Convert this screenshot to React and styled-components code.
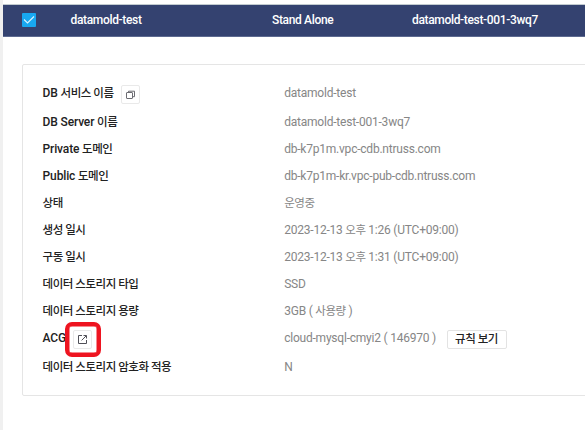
import React from "react";
import styled, { createGlobalStyle } from "styled-components";

const GlobalStyle = createGlobalStyle`
  * { box-sizing: border-box; }
  body {
    margin: 0;
    overflow: hidden;
    background: #fff;
    font-family: Roboto, "Noto Sans CJK KR", sans-serif;
    font-size: 12px;
  }
`;

const Page = styled.main`
  width: 585px;
  height: 430px;
  padding-top: 4px;
  border-left: 3px solid #f0f0f0;
  overflow: hidden;
`;

const SelectedRow = styled.header`
  display: grid;
  grid-template-columns: 48.5px 201.5px 140px 1fr;
  align-items: center;
  height: 33px;
  padding: 0 0 1px 19px;
  border-top: 1px solid #c2cbd0;
  border-bottom: 1px solid #5d6a90;
  background: #344270;
  color: #fff;
  white-space: nowrap;
`;

const HeaderText = styled.span`
  font-weight: 500;
  letter-spacing: -0.34px;
`;

const CheckBox = styled.span`
  display: flex;
  width: 14px;
  height: 14px;
  border-radius: 1px;
  background: #18a8f1;
`;

const Panel = styled.section`
  width: 600px;
  height: 332px;
  margin: 27px 0 0 19px;
  padding: 15px 19px 12px 19.6px;
  border: 1px solid #e5e5e5;
  border-radius: 2px;
`;

const Row = styled.div`
  display: grid;
  grid-template-columns: 241.6px 1fr;
  height: ${(p) => (p.$tall ? 29 : 27)}px;
  line-height: 27px;
  white-space: nowrap;
`;

const Cell = styled.div`
  display: flex;
  align-items: flex-start;
  height: 27px;
`;

const Label = styled.span`
  color: #222;
  font-weight: 500;
  letter-spacing: -0.15px;
`;

const Value = styled.span`
  color: #868686;
  letter-spacing: -0.22px;
`;

const Hangul = styled.span`
  font-size: 11.5px;
  letter-spacing: -0.46px;
`;

const IconButton = styled.button`
  display: flex;
  align-items: center;
  justify-content: center;
  width: 19px;
  height: 19px;
  margin: 5px 0 0 ${(p) => p.$gap}px;
  padding: 0;
  border: 1px solid #e9e9e9;
  border-radius: 2px;
  background: #fff;
`;

const Highlight = styled.span`
  display: flex;
  flex: none;
  width: 36px;
  height: 35px;
  margin: -3px 0 0 -1px;
  padding: 0 0 0 3.5px;
  border: 4px solid #ee1420;
  border-radius: 7px;
  box-shadow: inset 0 0 0 0.5px #ee1420;

  ${IconButton} {
    margin-top: 4px;
  }
`;

const RuleButton = styled.button`
  width: 60px;
  height: 19px;
  margin: 5px 0 0 10.5px;
  padding: 0;
  border: 1px solid #e3e3e3;
  border-radius: 2px;
  background: #fff;
  color: #222;
  font: 500 12px/17px Roboto, "Noto Sans CJK KR", sans-serif;
`;

const CheckIcon = () => (
  <svg width="14" height="14" viewBox="0 0 14 14" fill="none" stroke="#d9f2ff" strokeWidth="1.1">
    <path d="M2 6.5 5.5 10 12 3.5" />
  </svg>
);

const CopyIcon = () => (
  <svg width="9" height="9" viewBox="0 0 9 9" fill="none" stroke="#6c6c72" strokeWidth="1">
    <rect x="0.5" y="2.5" width="6" height="6" rx="0.5" />
    <path d="M2.5 2.5v-1.3h6v5.5h-2" />
  </svg>
);

const LinkIcon = () => (
  <svg width="9" height="9" viewBox="0 0 9 9" fill="none" stroke="#505058" strokeWidth="1">
    <path d="M4 0.5H0.5v8h8V5M3.6 5.4 8.2 0.8M5.5 0.5h3v3" />
  </svg>
);

const MixedText = ({ children }) =>
  children
    .split(/([가-힣]+(?: [가-힣]+)*)/)
    .map((part, i) => (i % 2 ? <Hangul key={i}>{part}</Hangul> : part));

const rows = [
  { label: "DB 서비스 이름", value: "datamold-test", copy: true },
  { label: "DB Server 이름", value: "datamold-test-001-3wq7" },
  { label: "Private 도메인", value: "db-k7p1m.vpc-cdb.ntruss.com" },
  { label: "Public 도메인", value: "db-k7p1m-kr.vpc-pub-cdb.ntruss.com" },
  { label: "상태", value: "운영중" },
  { label: "생성 일시", value: "2023-12-13 오후 1:26 (UTC+09:00)" },
  { label: "구동 일시", value: "2023-12-13 오후 1:31 (UTC+09:00)" },
  { label: "데이터 스토리지 타입", value: "SSD" },
  { label: "데이터 스토리지 용량", value: "3GB ( 사용량 )" },
  { label: "ACG", value: "cloud-mysql-cmyi2 ( 146970 )", acg: true },
  { label: "데이터 스토리지 암호화 적용", value: "N" },
];

export default function App() {
  return (
    <>
      <GlobalStyle />
      <Page>
        <SelectedRow>
          <CheckBox role="checkbox" aria-checked="true"><CheckIcon /></CheckBox>
          <HeaderText>datamold-test</HeaderText>
          <HeaderText>Stand Alone</HeaderText>
          <HeaderText>datamold-test-001-3wq7</HeaderText>
        </SelectedRow>
        <Panel>
          {rows.map((row) => (
            <Row key={row.label} $tall={row.copy || row.acg}>
              <Cell>
                <Label><MixedText>{row.label}</MixedText></Label>
                {row.copy && <IconButton $gap={7.5}><CopyIcon /></IconButton>}
                {row.acg && (
                  <Highlight>
                    <IconButton $gap={0}><LinkIcon /></IconButton>
                  </Highlight>
                )}
              </Cell>
              <Cell>
                <Value><MixedText>{row.value}</MixedText></Value>
                {row.acg && <RuleButton><Hangul>규칙 보기</Hangul></RuleButton>}
              </Cell>
            </Row>
          ))}
        </Panel>
      </Page>
    </>
  );
}
